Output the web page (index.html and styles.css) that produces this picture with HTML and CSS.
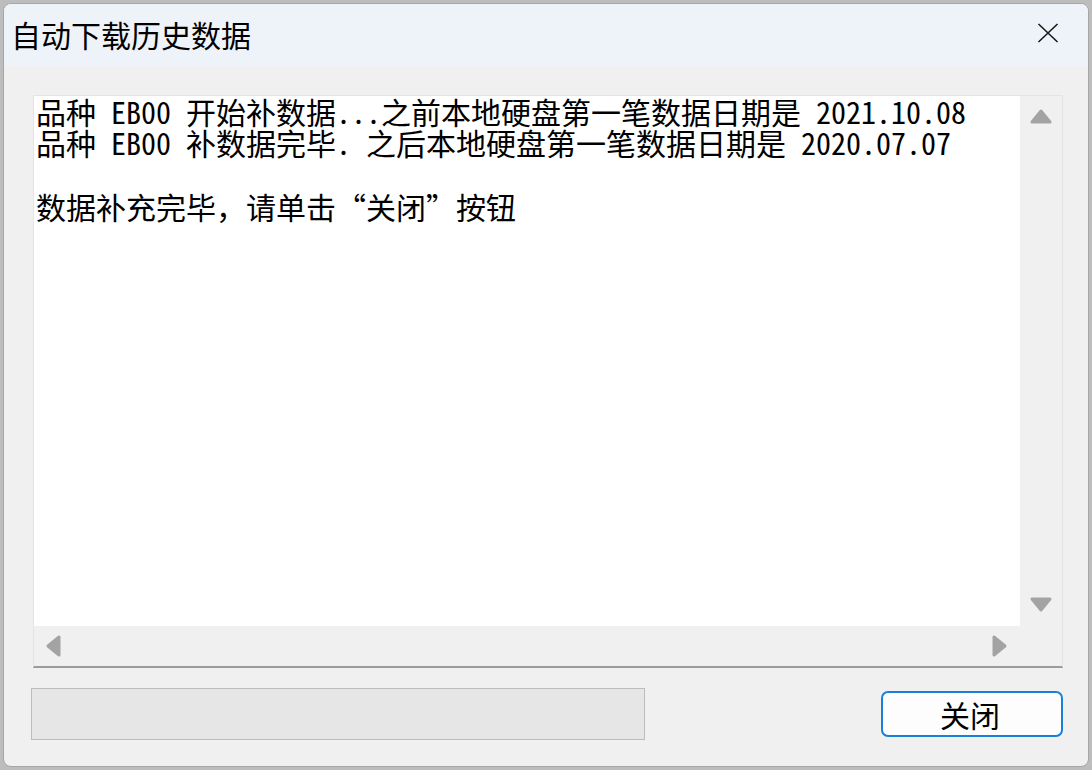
FILE: index.html
```html
<!DOCTYPE html>
<html lang="zh-CN">
<head>
<meta charset="utf-8">
<title>自动下载历史数据</title>
<link rel="stylesheet" href="styles.css">
</head>
<body>
<div class="window">
  <div class="titlebar">
    <span class="title">自动下载历史数据</span>
    <svg class="close" width="22" height="20" viewBox="0 0 22 20"><path d="M1.5 1 L20.5 19 M20.5 1 L1.5 19" stroke="#1a1a1a" stroke-width="1.6" fill="none"/></svg>
  </div>
  <div class="content">
    <div class="frame">
      <div class="log">
        <div class="line">品种 EB00 开始补数据...之前本地硬盘第一笔数据日期是 2021.10.08</div>
        <div class="line">品种 EB00 补数据完毕. 之后本地硬盘第一笔数据日期是 2020.07.07</div>
        <div class="line gap">数据补充完毕，请单击“关闭”按钮</div>
      </div>
      <div class="vscroll">
        <svg width="24" height="18" viewBox="0 0 24 18"><polygon points="12,3 21,14 3,14" fill="#a3a3a3" stroke="#a3a3a3" stroke-width="3" stroke-linejoin="round"/></svg>
        <svg width="24" height="18" viewBox="0 0 24 18"><polygon points="3,3 21,3 12,14" fill="#a3a3a3" stroke="#a3a3a3" stroke-width="3" stroke-linejoin="round"/></svg>
      </div>
      <div class="hscroll">
        <svg width="18" height="24" viewBox="0 0 18 24"><polygon points="3,12 14,3 14,21" fill="#a3a3a3" stroke="#a3a3a3" stroke-width="3" stroke-linejoin="round"/></svg>
        <svg width="18" height="24" viewBox="0 0 18 24"><polygon points="14,12 3,3 3,21" fill="#a3a3a3" stroke="#a3a3a3" stroke-width="3" stroke-linejoin="round"/></svg>
      </div>
      <div class="corner"></div>
    </div>
    <div class="bottom">
      <div class="progress"></div>
      <button class="btn">关闭</button>
    </div>
  </div>
</div>
</body>
</html>
```
FILE: styles.css
```css
html, body {
  margin: 0;
  padding: 0;
}
body {
  width: 1092px;
  height: 770px;
  background: #bdbdbd;
  overflow: hidden;
}
.window {
  margin: 3px 0 0 3px;
  width: 1086px;
  height: 764px;
  box-sizing: border-box;
  border: 1px solid #a6a6a6;
  border-radius: 8px;
  overflow: hidden;
  display: flex;
  flex-direction: column;
  background: #f0f0f0;
}
.titlebar {
  height: 62px;
  flex: none;
  background: #eef2f9;
  display: flex;
  align-items: center;
  justify-content: space-between;
  padding: 0 29px 0 7px;
}
.title {
  font-family: "Noto Sans CJK SC", "Noto Sans", sans-serif;
  font-size: 30px;
  line-height: 30px;
  color: #000;
  margin-top: -3px;
}
.close {
  display: block;
  margin-top: -4px;
}
.content {
  flex: 1;
  padding: 29px 25px 0 29px;
  display: flex;
  flex-direction: column;
}
.frame {
  height: 573px;
  box-sizing: border-box;
  border-top: 1px solid #e4e4e4;
  border-left: 1px solid #e4e4e4;
  border-right: 1px solid #e4e4e4;
  border-bottom: 2px solid #9b9b9b;
  display: grid;
  grid-template-columns: 1fr 42px;
  grid-template-rows: 1fr 40px;
}
.log {
  background: #fff;
  padding: 0 0 0 2px;
  font-family: "Noto Sans Mono CJK SC", "Noto Sans CJK SC", "DejaVu Sans Mono", monospace;
  font-size: 30px;
  line-height: 31px;
  color: #000;
  overflow: hidden;
}
.line {
  white-space: pre;
}
.line.gap {
  margin-top: 33px;
}
.vscroll {
  background: #f0f0f0;
  display: flex;
  flex-direction: column;
  justify-content: space-between;
  align-items: center;
  padding: 12px 0 12px 0;
}
.vscroll svg, .hscroll svg {
  display: block;
}
.hscroll {
  background: #f0f0f0;
  display: flex;
  justify-content: space-between;
  align-items: center;
  padding: 0 11px 0 11px;
}
.corner {
  background: #f0f0f0;
}
.bottom {
  margin-top: 20px;
  display: flex;
  justify-content: space-between;
  align-items: flex-start;
}
.progress {
  width: 614px;
  height: 52px;
  box-sizing: border-box;
  margin-left: -2px;
  border: 1px solid #bcbcbc;
  background: #e6e6e6;
}
.btn {
  width: 182px;
  height: 46px;
  margin-top: 3px;
  box-sizing: border-box;
  border: 2px solid #1a7fd8;
  border-radius: 7px;
  background: #fdfdfd;
  font-family: "Noto Sans Mono CJK SC", "Noto Sans CJK SC", sans-serif;
  font-size: 30px;
  line-height: 30px;
  color: #000;
  padding: 0 4px 0 0;
}
```
